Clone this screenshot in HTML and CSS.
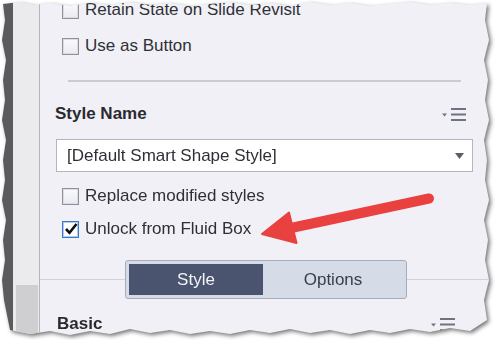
FILE: index.html
```html
<!DOCTYPE html>
<html lang="en">
<head>
  <meta charset="UTF-8" />
  <meta name="viewport" content="width=device-width, initial-scale=1.0"/>
  <title>Properties - Style</title>
  <link rel="stylesheet" href="styles.css">
</head>
<body>

  <div class="sheet-wrap">
    <div class="sheet">
      <div class="rail-dark"></div>
      <div class="rail-light"><div class="rail-block"></div></div>

      <div class="panel">
        <label class="check-row first">
          <span class="box"></span>
          <span>Retain State on Slide Revisit</span>
        </label>
        <label class="check-row second">
          <span class="box"></span>
          <span>Use as Button</span>
        </label>

        <div class="rule"></div>

        <div class="section-head style-head">
          <span>Style Name</span>
          <svg class="menu-icon" width="24" height="13" viewBox="0 0 24 13">
            <path d="M0 5.5h5l-2.5 3z" fill="#6f7280"/>
            <path d="M9 1h15M9 6.5h15M9 12h15" stroke="#6f7280" stroke-width="2"/>
          </svg>
        </div>

        <div class="dropdown">
          <span>[Default Smart Shape Style]</span>
          <svg width="9" height="6" viewBox="0 0 9 6"><path d="M0 0h9l-4.5 6z" fill="#5a5c66"/></svg>
        </div>

        <label class="check-row replace">
          <span class="box"></span>
          <span>Replace modified styles</span>
        </label>
        <label class="check-row unlock">
          <span class="box checked">
            <svg width="14" height="14" viewBox="0 0 14 14"><path d="M2 7l3.5 3.8L12.5 2" fill="none" stroke="#111" stroke-width="2.6"/></svg>
          </span>
          <span>Unlock from Fluid Box</span>
        </label>

        <div class="tabbar">
          <div class="tabs">
            <div class="tab active">Style</div>
            <div class="tab">Options</div>
          </div>
        </div>

        <div class="section-head basic-head">
          <span>Basic</span>
          <svg class="menu-icon" width="24" height="13" viewBox="0 0 24 13">
            <path d="M0 5.5h5l-2.5 3z" fill="#6f7280"/>
            <path d="M9 1h15M9 6.5h15M9 12h15" stroke="#6f7280" stroke-width="2"/>
          </svg>
        </div>
      </div>
    </div>

    <!-- callout arrow drawn over the panel -->
    <svg class="callout" width="492" height="340" viewBox="0 0 492 340">
      <path d="M429 198.5L291 228" stroke="#e8413f" stroke-width="10" stroke-linecap="round"/>
      <path d="M262 234L289 212.5L296.5 243z" fill="#e8413f" stroke="#e8413f" stroke-width="2" stroke-linejoin="round"/>
    </svg>
  </div>

</body>
</html>
```

FILE: styles.css
```css
body {
  margin: 0;
  background-color: #ffffff;
  font-family: 'Liberation Sans', Arial, sans-serif;
  font-size: 17px;
  color: #2f3036;
}
.sheet-wrap {
  position: relative;
  width: 492px;
  height: 340px;
  filter: drop-shadow(2px 2px 2px rgba(0, 0, 0, 0.55));
}
.sheet {
  display: flex;
  height: 100%;
  clip-path: polygon(3px 4px, 20px 2px, 35px 5px, 50px 3px, 70px 6px, 90px 3px, 110px 5px, 130px 2px, 150px 5px, 170px 3px, 190px 6px, 210px 4px, 230px 2px, 250px 5px, 270px 3px, 290px 6px, 310px 2px, 330px 5px, 350px 3px, 370px 6px, 390px 4px, 410px 2px, 430px 5px, 450px 3px, 470px 5px, 487px 3px,
    485px 20px, 489px 40px, 484px 60px, 488px 80px, 485px 100px, 489px 120px, 484px 140px, 487px 160px, 485px 180px, 489px 200px, 484px 220px, 488px 240px, 485px 260px, 489px 280px, 484px 300px, 487px 320px,
    470px 331px, 450px 328px, 430px 332px, 410px 329px, 390px 333px, 370px 330px, 350px 334px, 330px 330px, 310px 333px, 290px 329px, 270px 333px, 250px 330px, 230px 334px, 210px 331px, 190px 334px, 170px 330px, 150px 333px, 130px 329px, 110px 334px, 90px 331px, 70px 335px, 50px 331px, 30px 334px, 10px 330px,
    4px 300px, 2px 280px, 5px 260px, 3px 240px, 6px 220px, 2px 200px, 5px 180px, 3px 160px, 6px 140px, 2px 120px, 5px 100px, 3px 80px, 6px 60px, 2px 40px, 5px 20px);
}
.rail-dark {
  width: 13px;
  background-color: #5b5b5d;
}
.rail-light {
  width: 26px;
  background-color: #ebebed;
  border-right: 1px solid #b4b5bd;
  display: flex;
  flex-direction: column;
  justify-content: flex-end;
}
.rail-block {
  height: 55px;
  margin: 0 1px 0 3px;
  background-color: #cfcfd1;
}
.panel {
  flex: 1;
  background-color: #f0f0f6;
}
.check-row {
  display: flex;
  align-items: center;
  gap: 6px;
  height: 20px;
  line-height: 20px;
  padding-left: 22px;
  white-space: nowrap;
}
.check-row.second { margin-top: 16px; }
.check-row.replace { margin-top: 14px; }
.check-row.unlock { margin-top: 13px; }
.box {
  box-sizing: border-box;
  width: 17px;
  height: 17px;
  border: 1px solid #8f919d;
  box-shadow: inset 0 0 0 1px #dcdde4;
  background: linear-gradient(#fbfbfd, #e9eaf0);
  display: flex;
  align-items: center;
  justify-content: center;
}
.box.checked {
  border-color: #3c76c6;
  box-shadow: inset 0 0 0 1px #b3cbec;
  background: #ffffff;
}
.rule {
  height: 2px;
  margin: 24px 31px 0 28px;
  background-color: #cbcbd3;
}
.section-head {
  display: flex;
  justify-content: space-between;
  align-items: center;
  height: 20px;
  line-height: 20px;
  font-weight: bold;
  color: #2a2a2e;
  padding-left: 15px;
}
.style-head {
  margin-top: 22px;
  padding-right: 26px;
}
.basic-head {
  margin-top: 15px;
  padding-left: 17px;
  padding-right: 37px;
}
.dropdown {
  box-sizing: border-box;
  display: flex;
  justify-content: space-between;
  align-items: center;
  width: 417px;
  height: 33px;
  margin: 15px 0 0 16px;
  padding: 0 8px 0 10px;
  background-color: #ffffff;
  border: 1px solid #b3b5c1;
}
.tabbar {
  margin-top: 21px;
  height: 39px;
  background: linear-gradient(#d2d2da, #d2d2da) 0 19px / 100% 1px no-repeat;
}
.tabs {
  box-sizing: border-box;
  display: flex;
  width: 282px;
  height: 39px;
  margin-left: 85px;
  padding: 3px;
  background-color: #d6dbe8;
  border: 1px solid #a7acbb;
  border-radius: 3px;
}
.tab {
  flex: 1;
  display: flex;
  align-items: center;
  justify-content: center;
  color: #3a3d4a;
}
.tab.active {
  flex: 0 0 134px;
  background-color: #4a546f;
  color: #f2f3f8;
}
.callout {
  position: absolute;
  left: 0;
  top: 0;
  pointer-events: none;
}
```
